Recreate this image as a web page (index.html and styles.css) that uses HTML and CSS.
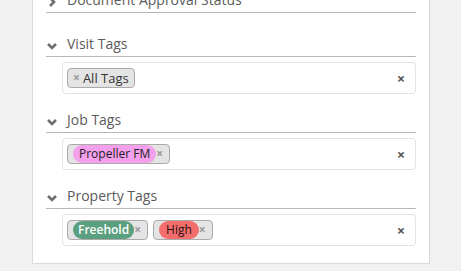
FILE: index.html
```html
<!DOCTYPE html>
<html>

<head>
  <link rel="stylesheet" href="styles.css">
</head>

<body>
  <div class="panel">
    <div class="section collapsed">
      <div class="section-header">
        <svg class="chevron" viewBox="0 0 10 10" width="10" height="10">
          <path d="M3 1 L7 5 L3 9" />
        </svg>
        <span>Document Approval Status</span>
      </div>
    </div>

    <div class="section">
      <div class="section-header">
        <svg class="chevron" viewBox="0 0 10 10" width="10" height="10">
          <path d="M1 3 L5 7 L9 3" />
        </svg>
        <span>Visit Tags</span>
      </div>
      <div class="tag-select">
        <ul class="choices">
          <li class="choice"><span class="choice-remove">×</span>All Tags</li>
        </ul>
        <span class="clear">×</span>
      </div>
    </div>

    <div class="section">
      <div class="section-header">
        <svg class="chevron" viewBox="0 0 10 10" width="10" height="10">
          <path d="M1 3 L5 7 L9 3" />
        </svg>
        <span>Job Tags</span>
      </div>
      <div class="tag-select">
        <ul class="choices">
          <li class="choice coloured"><span class="pill pink">Propeller FM</span><span class="choice-remove">×</span></li>
        </ul>
        <span class="clear">×</span>
      </div>
    </div>

    <div class="section">
      <div class="section-header">
        <svg class="chevron" viewBox="0 0 10 10" width="10" height="10">
          <path d="M1 3 L5 7 L9 3" />
        </svg>
        <span>Property Tags</span>
      </div>
      <div class="tag-select">
        <ul class="choices">
          <li class="choice coloured"><span class="pill green">Freehold</span><span class="choice-remove">×</span></li>
          <li class="choice coloured"><span class="pill red">High</span><span class="choice-remove">×</span></li>
        </ul>
        <span class="clear">×</span>
      </div>
    </div>
  </div>
</body>

</html>
```

FILE: styles.css
```css
:root {
  --page-bg: #f1f1f1;
  --panel-bg: #ffffff;
  --panel-border: #dadada;
  --header-text: #5b5b5b;
  --header-line: #b8b8b8;
  --chevron: #6f6f6f;
  --box-border: #e2e2e2;
  --choice-bg: #e4e4e4;
  --choice-border: #aaa;
  --remove-color: #999;
  --clear-color: #555;
}

body {
  margin: 0;
  padding: 0;
  background-color: var(--page-bg);
  font-family: 'Open Sans', 'Liberation Sans', sans-serif;
  color: #333;
}

.panel {
  box-sizing: border-box;
  display: flex;
  flex-direction: column;
  width: 398px;
  margin: -11px 0 0 32px;
  padding: 0 13px 2px;
  background-color: var(--panel-bg);
  border: 1px solid var(--panel-border);
  border-top: none;
}

.section {
  display: flex;
  flex-direction: column;
  margin-bottom: 15px;
}

.section-header {
  display: flex;
  align-items: center;
  height: 23px;
  border-bottom: 1px solid var(--header-line);
  margin-bottom: 5px;
  font-size: 14px;
  line-height: 19px;
  color: var(--header-text);
}

.section-header span {
  padding-bottom: 2px;
}

.chevron {
  flex-shrink: 0;
  margin: 2px 10px 0 1px;
  fill: none;
  stroke: var(--chevron);
  stroke-width: 2.6;
}

/* select2-like multi select */
.tag-select {
  display: flex;
  align-items: center;
  margin-left: 16px;
  border: 1px solid var(--box-border);
  border-radius: 4px;
  background-color: #fff;
}

.choices {
  flex-grow: 1;
  display: flex;
  flex-wrap: wrap;
  list-style: none;
  margin: 0;
  padding: 0 0 0 4px;
}

.choice {
  display: flex;
  align-items: center;
  height: 18px;
  margin: 5px 5px 5px 0;
  padding: 0 5px;
  background-color: var(--choice-bg);
  border: 1px solid var(--choice-border);
  border-radius: 4px;
  font-size: 13px;
  line-height: 18px;
  color: #333;
}

.choice-remove {
  margin-right: 3px;
  font-size: 12px;
  font-weight: bold;
  color: var(--remove-color);
}

.choice.coloured {
  padding: 0 6px 0 5px;
}

.choice.coloured .choice-remove {
  margin: 0;
}

.pill {
  height: 18px;
  padding: 0 6px;
  border-radius: 9px;
  font-size: 12px;
  line-height: 18px;
}

.pill.pink {
  background-color: #f4a0ec;
  color: #1e1e1e;
}

.pill.green {
  background-color: #5a9f7f;
  color: #fff;
  font-weight: 600;
  padding: 0 5px;
}

.pill.red {
  background-color: #f26d6b;
  color: #2a1212;
  padding: 0 7px;
}

.clear {
  margin-right: 10px;
  font-size: 14px;
  font-weight: bold;
  color: var(--clear-color);
}
```
